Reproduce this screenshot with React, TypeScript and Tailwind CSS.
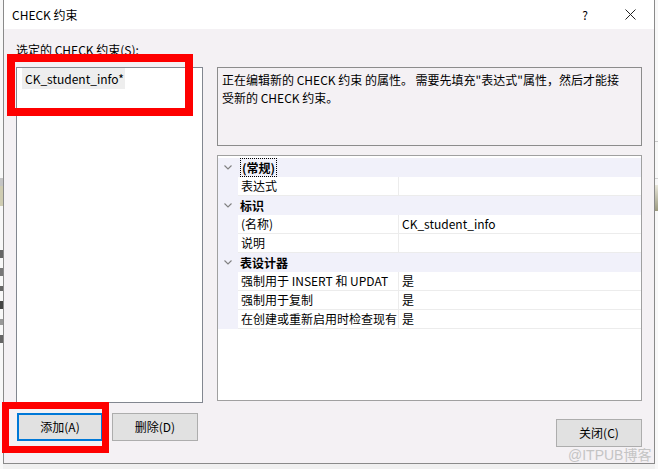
import React from 'react'

function Chevron(){
  return (
    <svg width="8" height="5" viewBox="0 0 8 5">
      <polyline points="0.5,0.5 4,4 7.5,0.5" fill="none" stroke="#808080" strokeWidth="1.1" />
    </svg>
  )
}

function Cat({ label, focus }: { label: string; focus?: boolean }){
  return (
    <div className="flex h-[19px] items-center bg-[#f1f1fa]">
      <div className="flex w-[20px] justify-center"><Chevron /></div>
      <div className="pl-[2px] font-bold leading-[13px]">
        {focus ? <span className="border border-dotted border-black px-[1px]">{label}</span> : label}
      </div>
    </div>
  )
}

function Prop({ name, value }: { name: string; value?: string }){
  return (
    <div className="flex h-[19px]">
      <div className="w-[20px] bg-[#f1f1fa]" />
      <div className="w-[161px] overflow-hidden whitespace-nowrap border-r border-b border-[#ececec] pl-[3px] leading-[18px]">{name}</div>
      <div className="flex-1 whitespace-nowrap border-b border-[#ececec] pl-[3px] leading-[18px]">{value}</div>
    </div>
  )
}

function Btn({ label, focus }: { label: string; focus?: boolean }){
  return (
    <div className={
      focus
        ? 'flex h-[28px] w-[86px] items-center justify-center border-2 border-[#0078d7] bg-[#e1e1e1]'
        : 'flex h-[28px] w-[86px] items-center justify-center border border-[#adadad] bg-[#e1e1e1]'
    }>
      {label}
    </div>
  )
}

export default function App(){
  return (
    <div className="relative flex h-[469px] w-[658px] overflow-hidden bg-[#f0f0f0] text-[12px] text-black font-['Noto_Sans_CJK_SC',sans-serif]">
      {/* background window, left */}
      <div className="flex w-[3px] flex-col bg-[#f8f8f8]">
        <div className="h-[178px]" />
        <div className="h-[8px] bg-[#c4c4c4]" />
        <div className="h-[20px] bg-[#cfccb2]" />
        <div className="h-[44px]" />
        <div className="flex flex-col gap-[10px] overflow-hidden">
          <div className="h-[8px] bg-[#666]" />
          <div className="h-[8px] bg-[#777]" />
          <div className="h-[5px] bg-[#666]" />
          <div className="h-[8px] bg-[#444]" />
          <div className="h-[6px] bg-[#999]" />
          <div className="h-[8px] bg-[#666]" />
        </div>
      </div>

      {/* dialog */}
      <div className="flex h-[464px] w-[652px] flex-col border-x border-b border-[#8a8a8a] bg-[#f4f1f4]">
        <div className="flex h-[29px] items-center bg-white pl-[8px]">
          <span>CHECK 约束</span>
          <span className="ml-auto mr-[37px]">?</span>
          <svg width="11" height="11" viewBox="0 0 11 11" className="mr-[18px]">
            <path d="M0.5 0.5 L10.5 10.5 M10.5 0.5 L0.5 10.5" stroke="#222" strokeWidth="1" />
          </svg>
        </div>

        <div className="flex flex-col px-[12px] pt-[13px]">
          <div className="h-[16px] leading-[16px]">选定的 CHECK 约束(S):</div>

          <div className="mt-[9px] flex gap-[14px]">
            {/* left column */}
            <div className="flex w-[187px] flex-col">
              <div className="h-[336px] border border-[#828790] bg-white pl-[5px]">
                <div className="inline-block h-[21px] bg-[#eeeeee] pl-[3px] pr-[1px] leading-[21px]">CK_student_info*</div>
              </div>
              <div className="mt-[10px] flex gap-[9px] pl-[1px]">
                <Btn label="添加(A)" focus />
                <Btn label="删除(D)" />
              </div>
            </div>

            {/* right column */}
            <div className="flex flex-1 flex-col">
              <div className="h-[79px] border border-[#8c8c8c] pl-[4px] pt-[3px] leading-[18px]">
                <div className="whitespace-nowrap">正在编辑新的 CHECK 约束 的属性。 需要先填充"表达式"属性，然后才能接</div>
                <div className="whitespace-nowrap">受新的 CHECK 约束。</div>
              </div>
              <div className="mt-[9px] h-[246px] border border-[#a0a0a0] bg-white pt-[2px]">
                <Cat label="(常规)" focus />
                <Prop name="表达式" />
                <Cat label="标识" />
                <Prop name="(名称)" value="CK_student_info" />
                <Prop name="说明" />
                <Cat label="表设计器" />
                <Prop name="强制用于 INSERT 和 UPDAT" value="是" />
                <Prop name="强制用于复制" value="是" />
                <Prop name="在创建或重新启用时检查现有" value="是" />
              </div>
              <div className="mt-[18px] flex justify-end">
                <Btn label="关闭(C)" />
              </div>
            </div>
          </div>
        </div>
      </div>

      {/* background window, right */}
      <div className="flex w-[3px] flex-col bg-[#f8f8f8]">
        <div className="h-[141px]" />
        <div className="h-[1px] bg-[#c8c8c8]" />
        <div className="h-[36px]" />
        <div className="h-[1px] bg-[#d0d0d0]" />
        <div className="h-[6px]" />
        <div className="h-[26px] bg-gradient-to-b from-[#e8e6da] to-[#9c9a80]" />
      </div>

      {/* annotations */}
      <div className="absolute left-[7px] top-[54px] h-[62px] w-[186px] border-[8px] border-[#fe0000]" />
      <div className="absolute left-[2px] top-[402px] h-[51px] w-[107px] border-[7px] border-[#fe0000]" />
      <div className="absolute left-[568px] top-[446px] text-[14px] leading-[18px] text-[#c4c4c4] font-['Liberation_Sans','Noto_Sans_CJK_SC',sans-serif]">@ITPUB博客</div>
    </div>
  )
}
